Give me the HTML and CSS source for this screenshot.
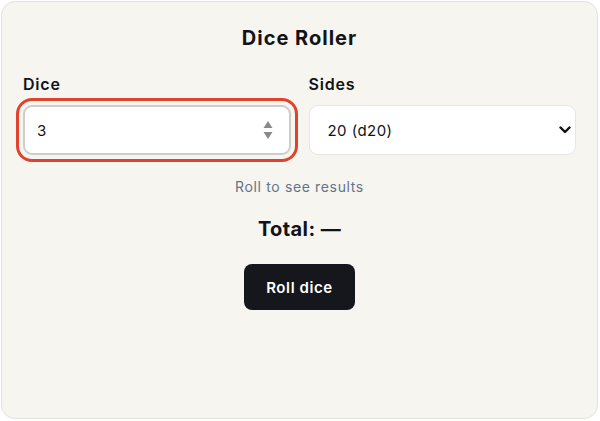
FILE: index.html
```html
<!DOCTYPE html>
<html lang="en">
<head>
<meta charset="utf-8">
<title>Dice Roller</title>
<link rel="stylesheet" href="styles.css">
</head>
<body>
<main class="card">
  <h1 class="title">Dice Roller</h1>
  <div class="fields">
    <label class="field">
      <span class="label">Dice</span>
      <span class="control">
        <input class="input focused" type="number" value="3" min="1" max="20">
        <svg class="spin" width="10" height="20" viewBox="0 0 10 20" aria-hidden="true">
          <path d="M5 1 L9.5 8 H0.5 Z" fill="#8a8a8a"/>
          <path d="M0.5 12 H9.5 L5 19 Z" fill="#8a8a8a"/>
        </svg>
      </span>
    </label>
    <label class="field">
      <span class="label">Sides</span>
      <span class="control">
        <select class="select">
          <option>4 (d4)</option>
          <option>6 (d6)</option>
          <option>8 (d8)</option>
          <option>10 (d10)</option>
          <option>12 (d12)</option>
          <option selected>20 (d20)</option>
        </select>
        <svg class="chev" width="12" height="8" viewBox="0 0 12 8" aria-hidden="true">
          <path d="M1.5 1.5 L6 6 L10.5 1.5" fill="none" stroke="#111" stroke-width="2.4" stroke-linecap="round" stroke-linejoin="round"/>
        </svg>
      </span>
    </label>
  </div>
  <p class="hint">Roll to see results</p>
  <p class="total">Total: —</p>
  <button class="roll" type="button">Roll dice</button>
</main>
</body>
</html>
```

FILE: styles.css
```css
* { box-sizing: border-box; }
html, body { height: 100%; }
body {
  margin: 0;
  padding: 1px 2px 2px 1px;
  background: #ffffff;
  font-family: "Inter", "Noto Sans", sans-serif;
  letter-spacing: 0.04em;
  color: #111318;
}
.card {
  height: 100%;
  background: #f6f5ef;
  border: 1px solid #e2e2e0;
  border-radius: 14px;
  padding: 22px 21px 20px 21px;
  display: flex;
  flex-direction: column;
  align-items: center;
}
.title {
  margin: 0;
  font-size: 20px;
  line-height: 28px;
  font-weight: 700;
  letter-spacing: 0.05em;
}
.fields {
  align-self: stretch;
  margin-top: 21px;
  display: grid;
  grid-template-columns: 1fr 1fr;
  column-gap: 18px;
}
.field {
  display: flex;
  flex-direction: column;
  gap: 10px;
}
.label {
  font-size: 16px;
  line-height: 22px;
  font-weight: 600;
  letter-spacing: 0.05em;
}
.control {
  position: relative;
  display: block;
}
.input, .select {
  width: 100%;
  height: 50px;
  font: inherit;
  font-size: 15px;
  letter-spacing: 0.03em;
  color: #111318;
  background: #ffffff;
  border-radius: 9px;
  appearance: none;
  -webkit-appearance: none;
  -moz-appearance: textfield;
}
.input {
  border: 2px solid #cdcdcb;
  padding: 0 12px;
}
.input::-webkit-inner-spin-button,
.input::-webkit-outer-spin-button { -webkit-appearance: none; margin: 0; }
.focused {
  outline: 3px solid #e0432d;
  outline-offset: 4px;
}
.select {
  border: 1px solid #e6e6e4;
  padding: 0 18px;
}
.spin {
  position: absolute;
  right: 18px;
  top: 15px;
}
.chev {
  position: absolute;
  right: 5px;
  top: 21px;
}
.hint {
  margin: 22px 0 0;
  font-size: 14px;
  line-height: 20px;
  color: #64748b;
}
.total {
  margin: 18px 0 0;
  font-size: 20px;
  line-height: 28px;
  font-weight: 700;
  letter-spacing: 0.02em;
}
.roll {
  margin-top: 21px;
  height: 46px;
  padding: 0 22px;
  border: 0;
  border-radius: 8px;
  background: #15171c;
  color: #ffffff;
  font: inherit;
  font-size: 15px;
  font-weight: 600;
  letter-spacing: 0.04em;
}
```
